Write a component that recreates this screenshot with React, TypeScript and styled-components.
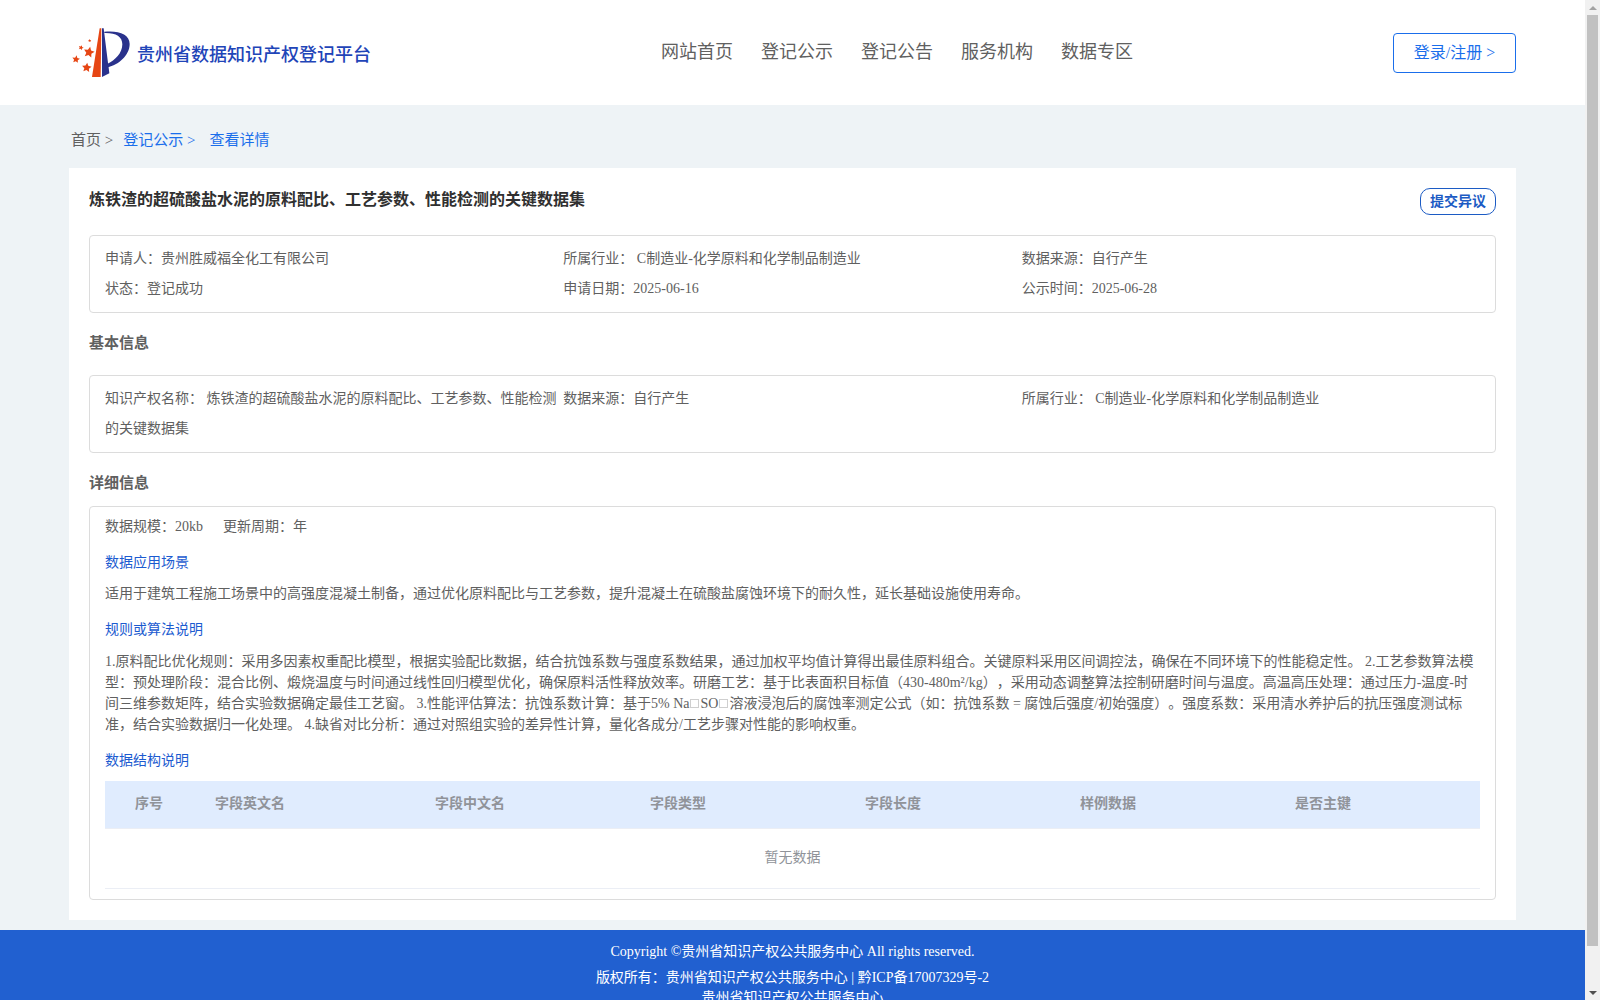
import React from "react";
import styled, { createGlobalStyle } from "styled-components";

const Global = createGlobalStyle`
  * { box-sizing: border-box; }
  body {
    margin: 0;
    overflow: hidden;
    font-family: "Liberation Serif", "Noto Sans CJK SC", serif;
    font-size: 14px;
    color: #606060;
    text-spacing-trim: space-all;
  }
`;

const Screen = styled.div`
  display: flex;
  height: 1000px;
  overflow: hidden;
`;

const Page = styled.div`
  flex: 1;
  min-width: 0;
  background: #eef3f6;
`;

const Header = styled.header`
  display: flex;
  align-items: center;
  justify-content: space-between;
  height: 105px;
  padding: 0 69px;
  background: #fff;
`;

const Brand = styled.div`
  display: flex;
  align-items: center;
  width: 592px;
  padding: 1px 0 0 3px;
  color: #1f45b8;
  font-size: 18px;
  line-height: 24px;
  font-weight: 500;
  svg { margin-right: 7px; }
`;

const BrandName = styled.span`
  padding-top: 3px;
`;

const Nav = styled.nav`
  display: flex;
  flex: 1;
  gap: 28px;
  padding-bottom: 2px;
  font-size: 18px;
  line-height: 24px;
`;

const Login = styled.button`
  width: 123px;
  height: 40px;
  padding: 0;
  border: 1px solid #1a6eeb;
  border-radius: 4px;
  background: #fff;
  color: #1a6eeb;
  font: inherit;
  font-size: 16px;
  line-height: 36px;
`;

const Crumbs = styled.div`
  display: flex;
  height: 63px;
  padding: 4px 71px 0;
  font-size: 15px;
  line-height: 62px;
  white-space: pre;
`;

const Crumb = styled.span<{ $active?: boolean; $gap?: number }>`
  margin-right: ${(p) => p.$gap ?? 0}px;
  color: ${(p) => (p.$active ? "#1a6eeb" : "#606060")};
`;

const Card = styled.main`
  height: 752px;
  margin: 0 69px 10px;
  padding: 20px;
  background: #fff;
`;

const TitleRow = styled.div`
  display: flex;
  justify-content: space-between;
  height: 47px;
`;

const Title = styled.h1`
  margin: 0;
  color: #303030;
  font-size: 16px;
  line-height: 23px;
  font-weight: 700;
`;

const Objection = styled.button`
  width: 76px;
  height: 27px;
  padding: 0;
  border: 1px solid #1c5bc4;
  border-radius: 10px;
  background: #fff;
  color: #1c5bc4;
  font: inherit;
  font-size: 14px;
  font-weight: 700;
  line-height: 24px;
`;

const Box = styled.section`
  padding: 8px 15px;
  border: 1px solid #dcdcdc;
  border-radius: 4px;
`;

const InfoGrid = styled(Box)`
  display: grid;
  grid-template-columns: repeat(3, 1fr);
  grid-auto-rows: 30px;
  height: 78px;
  line-height: 30px;
  white-space: pre;
`;

const Section = styled.h2<{ $height: number }>`
  height: ${(p) => p.$height}px;
  margin: 0;
  font-size: 15px;
  line-height: 61px;
  font-weight: 700;
`;

const Detail = styled(Box)`
  height: 394px;
  padding: 5px 15px 0;
`;

const Meta = styled.div`
  display: flex;
  gap: 20px;
  height: 36px;
  line-height: 30px;
`;

const SubHead = styled.h3`
  height: 30px;
  margin: 0;
  color: #1c5bd0;
  font-size: 14px;
  font-weight: 400;
  line-height: 30px;
`;

const Text = styled.div<{ $before?: number; $after: number }>`
  padding: ${(p) => p.$before ?? 5}px 0 ${(p) => p.$after}px;
  line-height: 21px;
  white-space: pre;
`;

const Missing = styled.span`
  display: inline-block;
  width: 9px;
  height: 9px;
  margin: 0 1px;
  border: 1px solid #cfcfcf;
`;

const Table = styled.div`
  padding-top: 5px;
`;

const TableHead = styled.div`
  display: grid;
  grid-template-columns: 100px 220px repeat(4, 215px) 1fr;
  height: 48px;
  border-bottom: 1px solid #ebeef5;
  background: #e0ecfe;
  color: #909399;
  font-weight: 700;
  line-height: 45px;
`;

const HeadCell = styled.div<{ $pad?: number }>`
  padding-left: ${(p) => p.$pad ?? 10}px;
`;

const Empty = styled.div`
  height: 60px;
  border-bottom: 1px solid #ebeef5;
  color: #909399;
  line-height: 58px;
  text-align: center;
`;

const Footer = styled.footer`
  display: flex;
  flex-direction: column;
  align-items: center;
  height: 120px;
  padding-top: 9px;
  background: #2160d0;
  color: #fff;
  white-space: pre;
`;

const FooterLine = styled.div<{ $height: number }>`
  height: ${(p) => p.$height}px;
  line-height: 26px;
`;

const ScrollTrack = styled.div`
  display: flex;
  flex-direction: column;
  align-items: center;
  width: 15px;
  background: #f1f1f1;
`;

const ScrollArrow = styled.div<{ $down?: boolean }>`
  display: flex;
  align-items: center;
  justify-content: center;
  height: 15px;
  &::before {
    content: "";
    border: 4px solid transparent;
    border-top: ${(p) => (p.$down ? "4px solid #505050" : "0")};
    border-bottom: ${(p) => (p.$down ? "0" : "4px solid #a3a3a3")};
  }
`;

const Thumb = styled.div`
  width: 11px;
  height: 931px;
  margin-bottom: auto;
  background: #c1c1c1;
`;

function star(cx: number, cy: number, r: number, turn: number) {
  return Array.from({ length: 10 }, (_, i) => {
    const a = ((i * 36 + turn - 90) * Math.PI) / 180;
    const k = i % 2 ? r * 0.48 : r;
    return `${(cx + k * Math.cos(a)).toFixed(1)},${(cy + k * Math.sin(a)).toFixed(1)}`;
  }).join(" ");
}

const Logo = () => (
  <svg width="58" height="50" viewBox="21 25 174 150">
    <g fill="#e64614">
      <path d="M104 26h5l-2 146H81Z" />
      <polygon points={star(72, 98, 17, 12)} />
      <polygon points={star(65, 144, 15, 6)} />
      <polygon points={star(33, 119, 12, 8)} />
      <polygon points={star(48, 84, 8, 20)} />
      <polygon points={star(74, 63, 5, 0)} />
    </g>
    <g fill="#2a328c">
      <path d="M111 26h5l17 135-22 11Z" />
      <path d="M118 36C160 32 194 42 194 73C194 107 160 136 128 143V132C150 122 172 101 172 74C172 50 152 39 118 40Z" />
    </g>
  </svg>
);

const navItems = ["网站首页", "登记公示", "登记公告", "服务机构", "数据专区"];

const summary = [
  "申请人：贵州胜威福全化工有限公司",
  "所属行业： C制造业-化学原料和化学制品制造业",
  "数据来源：自行产生",
  "状态：登记成功",
  "申请日期：2025-06-16",
  "公示时间：2025-06-28",
];

const basics = [
  "知识产权名称： 炼铁渣的超硫酸盐水泥的原料配比、工艺参数、性能检测\n的关键数据集",
  "数据来源：自行产生",
  "所属行业： C制造业-化学原料和化学制品制造业",
];

const columns = ["序号", "字段英文名", "字段中文名", "字段类型", "字段长度", "样例数据", "是否主键"];

export default function App() {
  return (
    <Screen>
      <Global />
      <Page>
        <Header>
          <Brand>
            <Logo />
            <BrandName>贵州省数据知识产权登记平台</BrandName>
          </Brand>
          <Nav>
            {navItems.map((n) => (
              <span key={n}>{n}</span>
            ))}
          </Nav>
          <Login>登录/注册 &gt;</Login>
        </Header>
        <Crumbs>
          <Crumb $gap={10}>首页 &gt;</Crumb>
          <Crumb $active $gap={14}>登记公示 &gt;</Crumb>
          <Crumb $active>查看详情</Crumb>
        </Crumbs>
        <Card>
          <TitleRow>
            <Title>炼铁渣的超硫酸盐水泥的原料配比、工艺参数、性能检测的关键数据集</Title>
            <Objection>提交异议</Objection>
          </TitleRow>
          <InfoGrid>
            {summary.map((s) => (
              <div key={s}>{s}</div>
            ))}
          </InfoGrid>
          <Section $height={62}>基本信息</Section>
          <InfoGrid>
            {basics.map((s) => (
              <div key={s}>{s}</div>
            ))}
          </InfoGrid>
          <Section $height={53}>详细信息</Section>
          <Detail>
            <Meta>
              <span>数据规模：20kb</span>
              <span>更新周期：年</span>
            </Meta>
            <SubHead>数据应用场景</SubHead>
            <Text $after={11}>
              适用于建筑工程施工场景中的高强度混凝土制备，通过优化原料配比与工艺参数，提升混凝土在硫酸盐腐蚀环境下的耐久性，延长基础设施使用寿命。
            </Text>
            <SubHead>规则或算法说明</SubHead>
            <Text $before={6} $after={11}>
              {"1.原料配比优化规则：采用多因素权重配比模型，根据实验配比数据，结合抗蚀系数与强度系数结果，通过加权平均值计算得出最佳原料组合。关键原料采用区间调控法，确保在不同环境下的性能稳定性。 2.工艺参数算法模\n"}
              {"型：预处理阶段：混合比例、煅烧温度与时间通过线性回归模型优化，确保原料活性释放效率。研磨工艺：基于比表面积目标值（430-480m²/kg），采用动态调整算法控制研磨时间与温度。高温高压处理：通过压力-温度-时\n"}
              {"间三维参数矩阵，结合实验数据确定最佳工艺窗。 3.性能评估算法：抗蚀系数计算：基于5% Na"}
              <Missing />
              SO
              <Missing />
              {"溶液浸泡后的腐蚀率测定公式（如：抗蚀系数 = 腐蚀后强度/初始强度）。强度系数：采用清水养护后的抗压强度测试标\n"}
              {"准，结合实验数据归一化处理。 4.缺省对比分析：通过对照组实验的差异性计算，量化各成分/工艺步骤对性能的影响权重。"}
            </Text>
            <SubHead>数据结构说明</SubHead>
            <Table>
              <TableHead>
                {columns.map((c, i) => (
                  <HeadCell key={c} $pad={i === 0 ? 30 : 10}>
                    {c}
                  </HeadCell>
                ))}
              </TableHead>
              <Empty>暂无数据</Empty>
            </Table>
          </Detail>
        </Card>
        <Footer>
          <FooterLine $height={26}>Copyright ©贵州省知识产权公共服务中心 All rights reserved.</FooterLine>
          <FooterLine $height={20}>版权所有：贵州省知识产权公共服务中心 | 黔ICP备17007329号-2</FooterLine>
          <FooterLine $height={26}>贵州省知识产权公共服务中心</FooterLine>
        </Footer>
      </Page>
      <ScrollTrack>
        <ScrollArrow />
        <Thumb />
        <ScrollArrow $down />
      </ScrollTrack>
    </Screen>
  );
}
